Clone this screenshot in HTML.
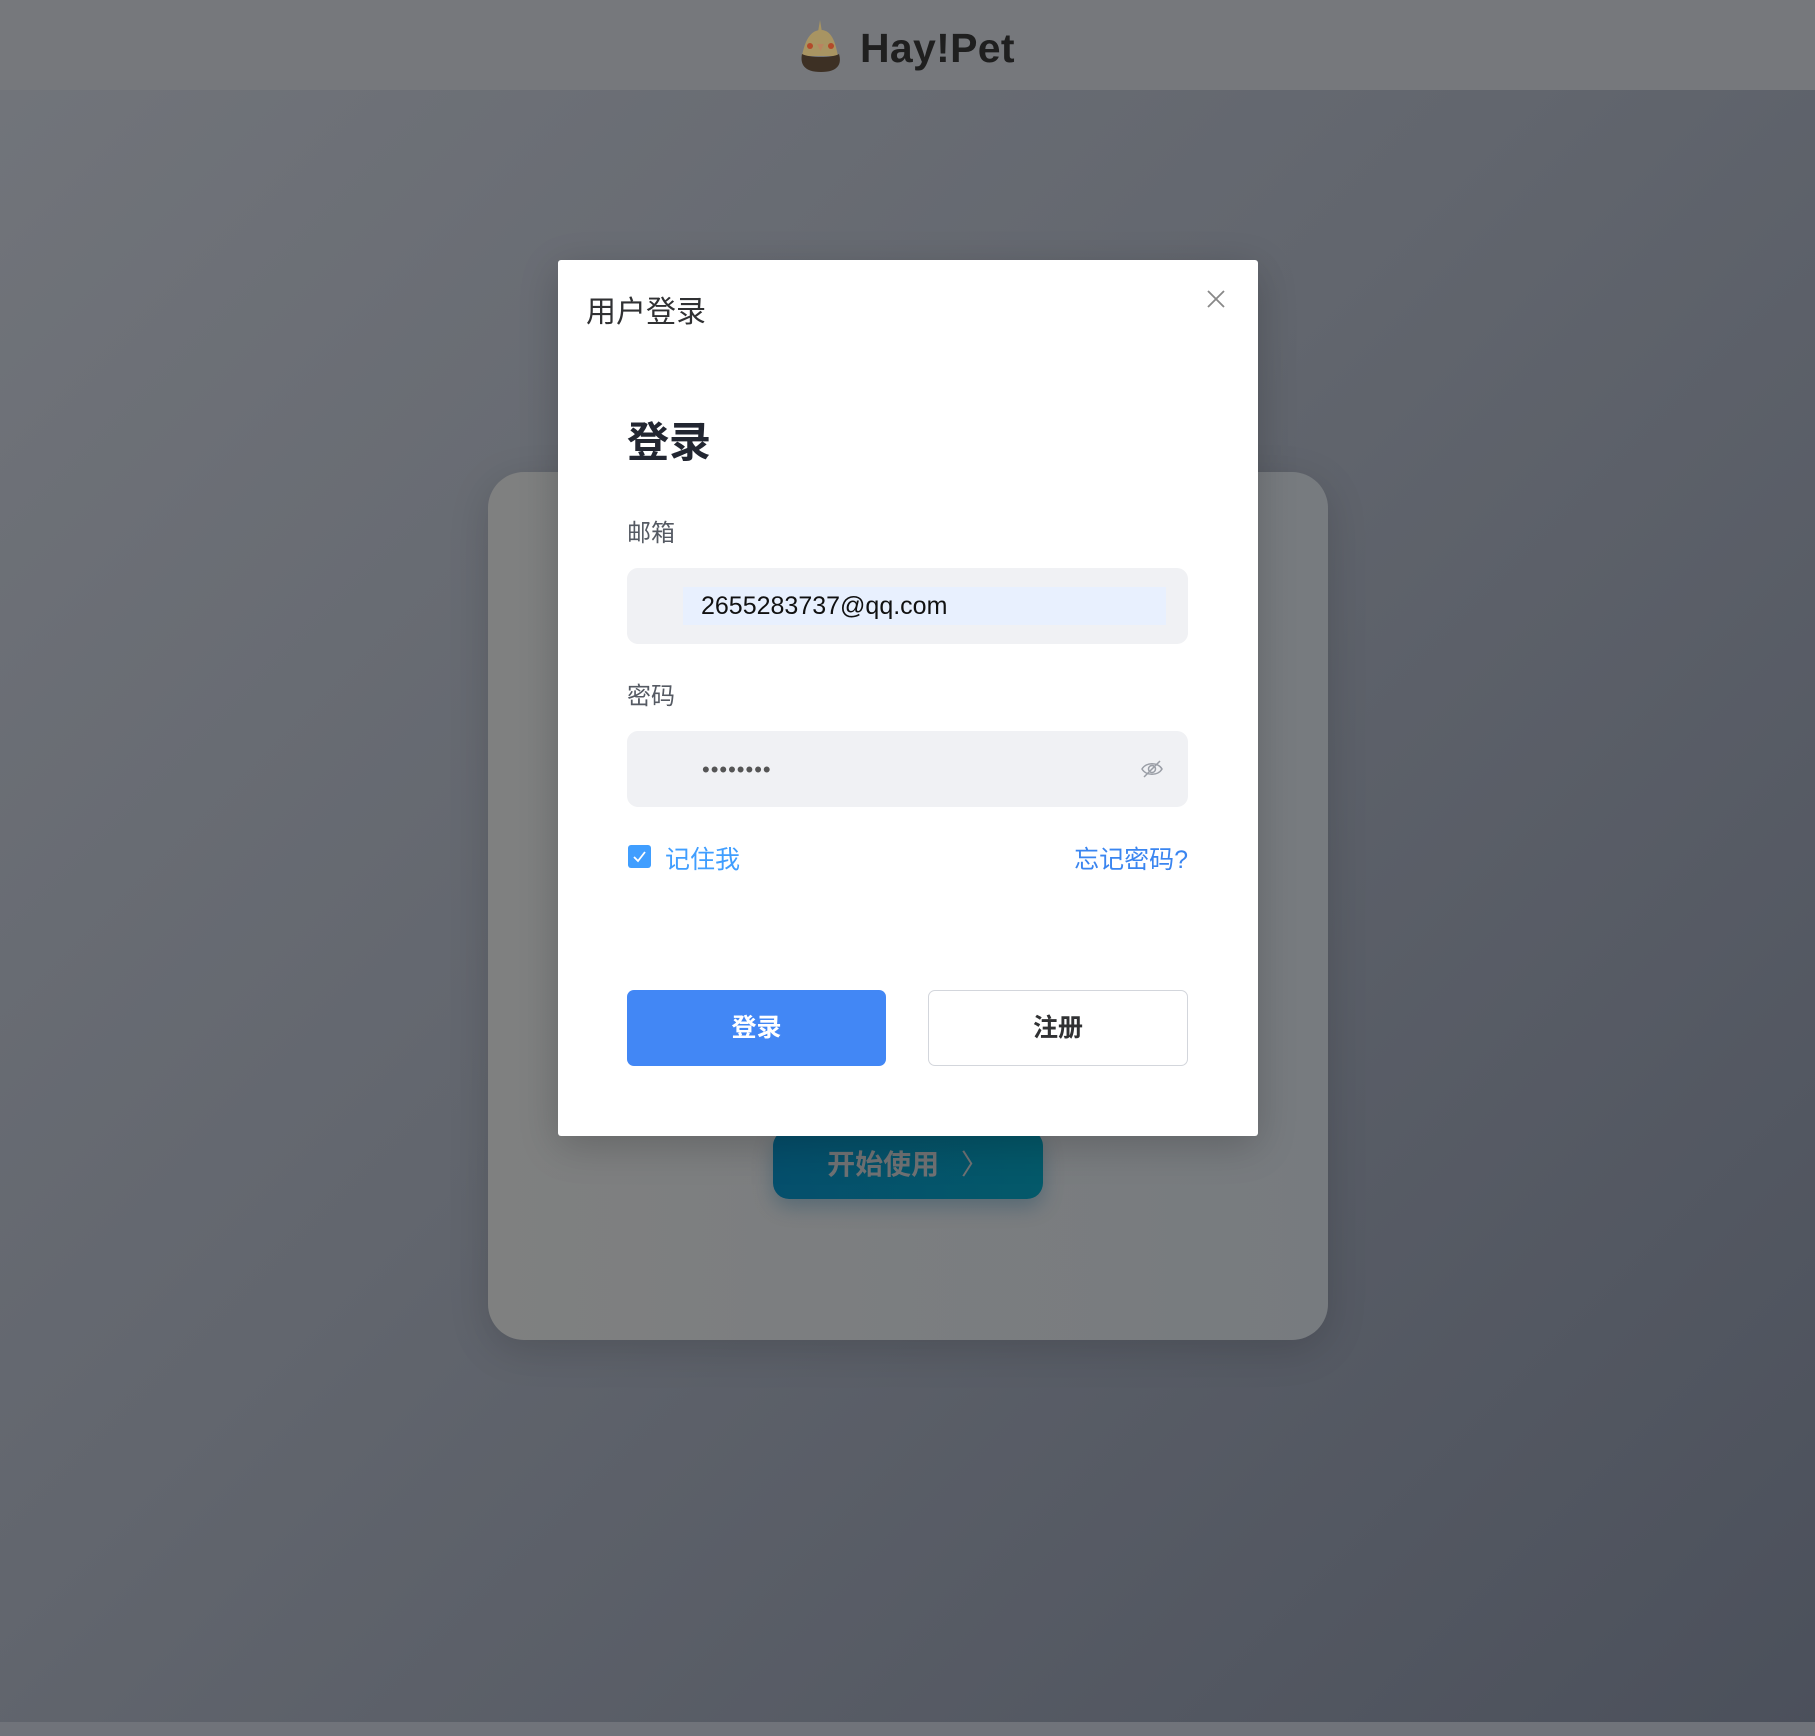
<!DOCTYPE html>
<html><head><meta charset="utf-8"><style>
*{margin:0;padding:0;box-sizing:border-box}
body{width:1815px;height:1736px;overflow:hidden;position:relative;font-family:"Liberation Sans","Noto Sans CJK SC",sans-serif;background:linear-gradient(135deg,#72757b 0%,#62666e 45%,#4b505b 100%)}
.hdr{position:absolute;left:0;top:0;width:1815px;height:90px;background:#76787c}
.logo{position:absolute;left:860px;top:25px;font-size:41px;font-weight:bold;color:#1f1f1f;letter-spacing:0.3px}
.card{position:absolute;left:488px;top:472px;width:840px;height:868px;border-radius:36px;background:linear-gradient(90deg,#7f8080,#777b7f);box-shadow:0 10px 40px rgba(0,0,0,.15)}
.start{position:absolute;left:773px;top:1130px;width:270px;height:69px;border-radius:16px;background:linear-gradient(90deg,#054f6c,#04596a);color:#707274;font-weight:bold;font-size:28px;line-height:69px;text-align:center;box-shadow:0 8px 20px rgba(0,60,90,.3)}
.modal{position:absolute;left:558px;top:260px;width:700px;height:876px;background:#fff;border-radius:3px;box-shadow:0 10px 40px rgba(0,0,0,.2)}
.abs{position:absolute}
.inp{position:absolute;left:69px;width:561px;height:76px;border-radius:11px;background:#f0f1f4}
.bottom{position:absolute;left:0;top:1722px;width:1815px;height:14px;background:#70737a}
</style></head><body>
<div class="hdr"></div>
<svg class="abs" style="left:798px;top:20px" width="46" height="54" viewBox="0 0 46 54">
<path d="M22 0 L24 12 L20 12 Z" fill="#a89462"/>
<path d="M23 10 C10 10 6 26 4 36 L40 36 C38 26 35 10 23 10Z" fill="#a89462"/>
<path d="M4 34 C2 44 6 52 23 52 C40 52 44 44 41 34 C34 38 12 38 4 34Z" fill="#3d3024"/>
<circle cx="12" cy="26" r="3" fill="#b34a2a"/><circle cx="33" cy="26" r="3" fill="#b34a2a"/>
<path d="M19 24 L26 24 L22.5 31Z" fill="#b98460"/>
</svg>
<div class="logo">Hay!Pet</div>
<div class="card"></div>
<div class="start">开始使用 <span style="font-weight:normal;font-size:28px;margin-left:14px">〉</span></div>
<div class="modal">
 <div class="abs" style="left:28px;top:27px;font-size:30px;color:#303133">用户登录</div>
 <svg class="abs" style="left:649px;top:30px" width="18" height="18" viewBox="0 0 18 18"><path d="M1 1L17 17M17 1L1 17" stroke="#888" stroke-width="1.8"/></svg>
 <div class="abs" style="left:69px;top:149px;font-size:42px;font-weight:bold;color:#222631">登录</div>
 <div class="abs" style="left:69px;top:253px;font-size:24px;color:#555a63">邮箱</div>
 <div class="inp" style="top:308px"><div class="abs" style="left:56px;top:19px;width:483px;height:38px;background:#e8f0fe"></div><div class="abs" style="left:74px;top:24px;font-size:25px;color:#111">2655283737@qq.com</div></div>
 <div class="abs" style="left:69px;top:416px;font-size:24px;color:#555a63">密码</div>
 <div class="inp" style="top:471px"><div class="abs" style="left:75px;top:26px;font-size:22px;color:#555;letter-spacing:1px">••••••••</div>
 <svg class="abs" style="left:513px;top:28px" width="24" height="20" viewBox="0 0 24 20"><path d="M2 10C6 3 18 3 22 10C18 17 6 17 2 10Z" fill="none" stroke="#9a9ea6" stroke-width="1.5"/><circle cx="12" cy="10" r="3.5" fill="none" stroke="#9a9ea6" stroke-width="1.5"/><path d="M4 18L20 2" stroke="#9a9ea6" stroke-width="1.5"/></svg></div>
 <div class="abs" style="left:70px;top:585px;width:23px;height:23px;border-radius:3px;background:#409eff"><svg width="23" height="23"><path d="M6 12L10 16L17 7" fill="none" stroke="#fff" stroke-width="1.8"/></svg></div>
 <div class="abs" style="left:107px;top:580px;font-size:25px;color:#409eff">记住我</div>
 <div class="abs" style="right:70px;top:580px;font-size:25px;color:#3a85f0">忘记密码?</div>
 <div class="abs" style="left:69px;top:730px;width:259px;height:76px;border-radius:7px;background:#4287f5;color:#fff;font-size:25px;font-weight:bold;text-align:center;line-height:76px">登录</div>
 <div class="abs" style="left:370px;top:730px;width:260px;height:76px;border-radius:7px;border:1px solid #d3d6dc;color:#303133;font-size:25px;font-weight:bold;text-align:center;line-height:74px">注册</div>
</div>
<div class="bottom"></div>
</body></html>
